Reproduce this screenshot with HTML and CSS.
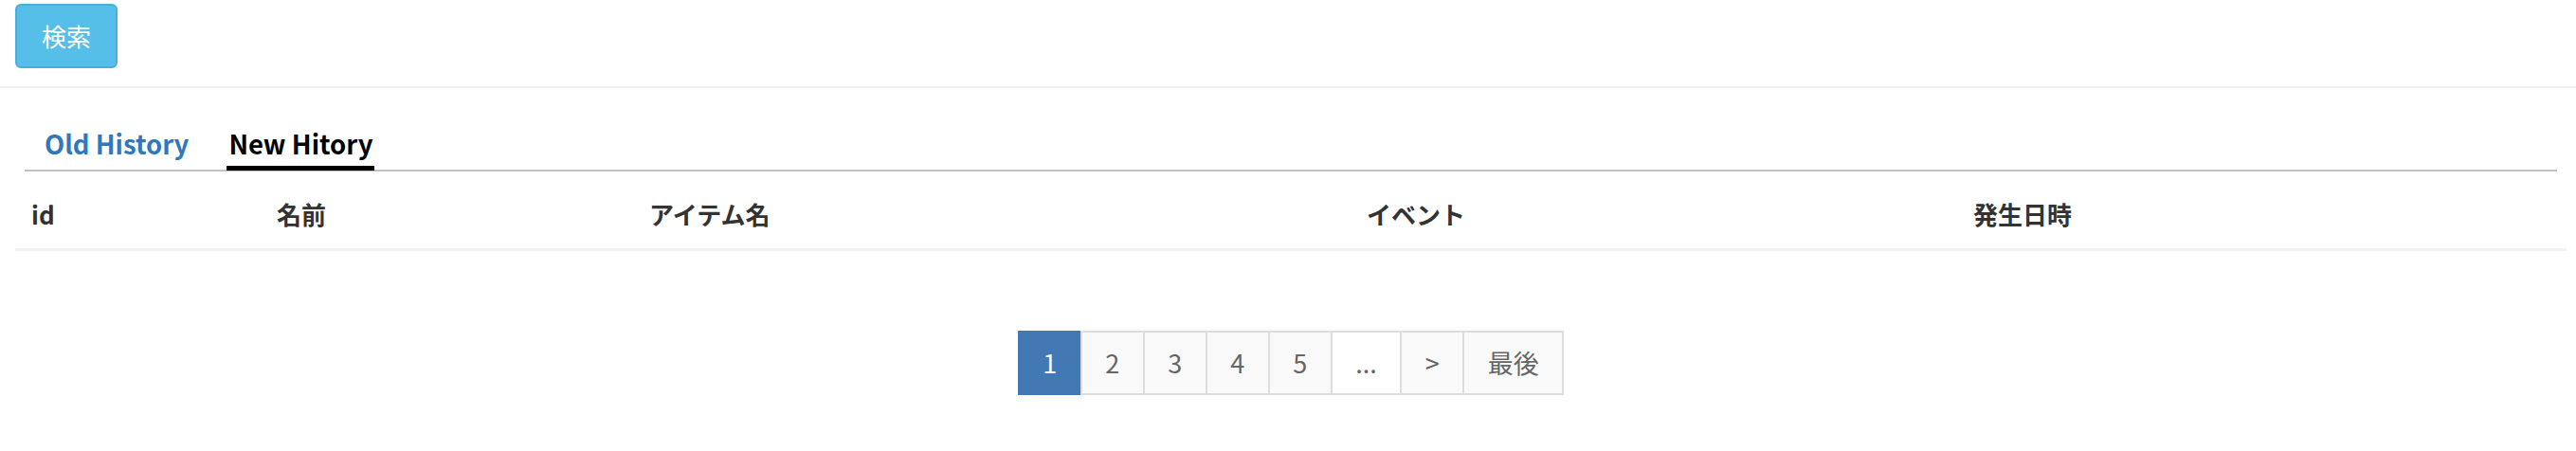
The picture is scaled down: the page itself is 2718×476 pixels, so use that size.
FILE: index.html
```html
<!DOCTYPE html>
<html lang="ja">
<head>
<meta charset="utf-8">
<title>History</title>
<link rel="stylesheet" href="styles.css">
</head>
<body>
<div class="top">
  <button class="btn-search" type="button">検索</button>
</div>
<div class="content">
  <ul class="tabs">
    <li class="tab">Old History</li>
    <li class="tab active">New Hitory</li>
  </ul>
  <div class="table">
    <div class="th c1">id</div>
    <div class="th c2">名前</div>
    <div class="th c3">アイテム名</div>
    <div class="th c4">イベント</div>
    <div class="th c5">発生日時</div>
  </div>
  <div class="pager-wrap">
    <ul class="pager">
      <li class="pg active">1</li>
      <li class="pg">2</li>
      <li class="pg">3</li>
      <li class="pg">4</li>
      <li class="pg">5</li>
      <li class="pg dots">...</li>
      <li class="pg">&gt;</li>
      <li class="pg">最後</li>
    </ul>
  </div>
</div>
</body>
</html>
```
FILE: styles.css
```css
html, body {
  margin: 0;
  padding: 0;
  background: #fff;
}
body {
  font-family: "Noto Sans CJK JP", "Noto Sans", sans-serif;
  color: #333;
}
.top {
  padding: 4px 16px 19px;
  border-bottom: 2px solid #eeeeee;
}
.btn-search {
  display: block;
  width: 108px;
  height: 68px;
  margin: 0;
  padding: 0;
  background: #55bfea;
  border: 2px solid #4aafdc;
  border-radius: 6px;
  color: #fff;
  font-family: "Noto Sans CJK JP", sans-serif;
  font-size: 26px;
  line-height: 1;
}
.content {
  padding: 0 10px 0 16px;
}
.tabs {
  list-style: none;
  display: flex;
  gap: 38px;
  margin: 0 10px 0 10px;
  padding: 22px 0 0 19px;
  border-bottom: 2px solid #c2c2c2;
  height: 64px;
  box-sizing: content-box;
}
.tab {
  padding: 0 2px;
  font-size: 27.5px;
  font-weight: 700;
  color: #2f78bb;
  line-height: 72px;
  height: 60px;
  margin-bottom: -1px;
}
.tab.active {
  color: #000;
  border-bottom: 5px solid #000;
}
.table {
  display: grid;
  grid-template-columns: 259px 393px 757px 640px 1fr;
  border-bottom: 3px solid #f2f2f2;
}
.th {
  padding: 25px 17px 16px;
  font-size: 26px;
  font-weight: 700;
  line-height: 40px;
  color: #333;
}
.pager-wrap {
  display: flex;
  justify-content: center;
  padding-top: 84px;
}
.pager {
  list-style: none;
  display: flex;
  margin: 0;
  padding: 0;
}
.pg {
  height: 64px;
  padding: 0 24.5px;
  border: 2px solid #dddddd;
  background: #f9f9f9;
  color: #666;
  font-size: 27px;
  line-height: 64px;
  margin-left: -2px;
}
.pg:first-child {
  margin-left: 0;
}
.pg.active {
  background: #4279b4;
  border-color: #4279b4;
  color: #fff;
}
.pg.dots {
  background: #fff;
}
```
